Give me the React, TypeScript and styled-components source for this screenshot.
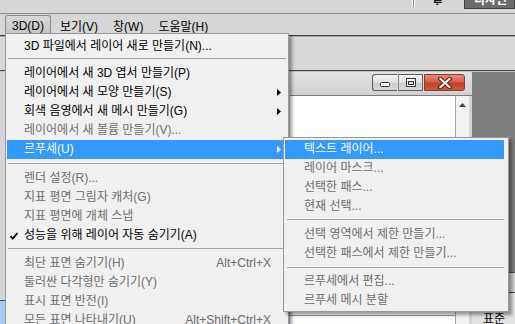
import React from "react";
import styled, { createGlobalStyle, css } from "styled-components";

const Global = createGlobalStyle`
  html, body { margin: 0; padding: 0; }
  body { width: 515px; height: 324px; overflow: hidden; background: #d6d6d6; }
  * { box-sizing: border-box; }
`;

const UI_FONT = `"Liberation Sans", "Noto Sans CJK KR", sans-serif`;

const Screen = styled.div`
  position: relative;
  width: 515px;
  height: 324px;
  overflow: hidden;
  display: flex;
  flex-direction: column;
  font-family: ${UI_FONT};
  font-size: 12px;
  background: #d6d6d6;
`;

/* ---------- top workspace strip ---------- */
const TopStrip = styled.div`
  height: 14px;
  flex: none;
  display: flex;
  align-items: flex-start;
  padding-left: 412px;
  border-bottom: 1px solid #8d8d8d;
  background: #d6d6d6;
  overflow: hidden;
`;
const Pipe = styled.div`
  width: 3px;
  height: 7px;
  border-left: 1px solid #fbfbfb;
  border-right: 1px solid #fbfbfb;
  background: #8a8a8a;
`;
const WorkLabel = styled.div`
  margin-left: 17px;
  height: 5px;
  overflow: hidden;
  font-weight: bold;
  color: #111;
  line-height: 12px;
  span { display: block; margin-top: -8px; }
`;
const WorkButton = styled.div`
  margin-left: 14px;
  width: 60px;
  height: 9px;
  overflow: hidden;
  background: #6c6c6c;
  border: 1px solid #3e3e3e;
  border-top: none;
  color: #fff;
  font-weight: bold;
  line-height: 12px;
  padding-left: 9px;
  span { display: block; margin-top: -6px; }
`;

/* ---------- menu bar ---------- */
const MenuBar = styled.div`
  height: 22px;
  flex: none;
  display: flex;
  align-items: flex-start;
  gap: 3px;
  padding: 1px 0 0 5px;
  border-bottom: 1px solid #3d3d3d;
  background: #d6d6d6;
`;
const MenuTitle = styled.div<{ $active?: boolean }>`
  height: 19px;
  display: flex;
  align-items: center;
  padding: 0 5px;
  border: 1px solid transparent;
  border-bottom: none;
  color: #000;
  white-space: nowrap;
  ${(p) =>
    p.$active &&
    css`
      height: 20px;
      padding: 0 6px;
      border-color: #8a8a8a;
      border-radius: 3px 3px 0 0;
      background: linear-gradient(#d8d8d8, #c3c3c3);
    `}
`;

/* ---------- options bar ---------- */
const OptionsBar = styled.div`
  height: 35px;
  flex: none;
  border-top: 1px solid #a2a2a2;
  border-bottom: 1px solid #454545;
  background: #d8d8d8;
`;

/* ---------- main work area ---------- */
const MainArea = styled.div`
  flex: 1;
  display: flex;
  border-top: 1px solid #c4c4c4;
  min-height: 0;
`;
const LeftDock = styled.div`
  width: 290px;
  flex: none;
  display: flex;
  flex-direction: column;
  justify-content: flex-end;
  background: #d6d6d6;
`;
const BlueTab = styled.div`
  height: 24px;
  border-top: 1px solid #4f4f4f;
  background: #a9c9ef;
`;

const DocWindow = styled.div`
  width: 182px;
  flex: none;
  display: flex;
  flex-direction: column;
  background: #d3d3d3;
  border-top-right-radius: 5px;
`;
const TitleBar = styled.div`
  height: 23px;
  flex: none;
  display: flex;
  justify-content: flex-end;
  align-items: flex-start;
  padding: 2px 7px 0 0;
  background: linear-gradient(#e3e3e3, #d1d1d1);
  border-top-right-radius: 5px;
`;
const WinButtons = styled.div`
  display: flex;
  gap: 1px;
`;
const WinBtn = styled.div<{ $kind: "min" | "max" | "close" }>`
  height: 17px;
  width: ${(p) => (p.$kind === "close" ? 41 : 25)}px;
  display: flex;
  align-items: center;
  justify-content: center;
  border: 1px solid #5e5e5e;
  background: linear-gradient(#f6f6f6 0%, #dedede 50%, #c9c9c9 51%, #d8d8d8 100%);
  ${(p) =>
    p.$kind === "min" &&
    css`
      border-radius: 3px 0 0 3px;
      border-right: none;
    `}
  ${(p) =>
    p.$kind === "max" &&
    css`
      border-left: 1px solid #8a8a8a;
    `}
  ${(p) =>
    p.$kind === "close" &&
    css`
      border-radius: 0 3px 3px 0;
      border-color: #8a3a2e;
      background: linear-gradient(#e98b7b 0%, #d3604c 45%, #bf3f2a 55%, #cf5a43 100%);
    `}
`;
const DocBody = styled.div`
  flex: 1;
  display: flex;
  border-top: 1px solid #7b7b7b;
  padding-right: 3px;
  min-height: 0;
`;
const Canvas = styled.div`
  flex: 1;
  display: flex;
  flex-direction: column;
  justify-content: flex-end;
  background: #fff;
`;
const CanvasFoot = styled.div`
  height: 9px;
  border-top: 1px solid #9c9c9c;
  background: #fdfdfd;
`;
const VScroll = styled.div`
  width: 14px;
  flex: none;
  display: flex;
  justify-content: center;
  padding-top: 7px;
  background: #f2f2f2;
  border-left: 1px solid #a4a4a4;
`;

const RightDock = styled.div`
  flex: 1;
  display: flex;
  flex-direction: column;
`;
const DarkArea = styled.div`
  flex: 1;
  background: #7f7f7f;
`;
const PanelArea = styled.div`
  height: 52px;
  flex: none;
  display: flex;
  flex-direction: column;
  justify-content: space-between;
  border-top: 1px solid #555;
  background: #e2e2e2;
`;
const PanelTab = styled.div`
  align-self: flex-end;
  width: 8px;
  height: 20px;
  border-left: 1px solid #4a4a4a;
  border-bottom: 1px solid #4a4a4a;
  background: #d0d0d0;
`;
const PanelText = styled.div`
  padding-left: 11px;
  height: 12px;
  line-height: 14px;
  color: #000;
  overflow: hidden;
`;

/* ---------- dropdown menus ---------- */
const MenuPanel = styled.div<{ $left: number; $top: number; $width: number; $pad: string }>`
  position: absolute;
  left: ${(p) => p.$left}px;
  top: ${(p) => p.$top}px;
  width: ${(p) => p.$width}px;
  padding: ${(p) => p.$pad};
  border: 1px solid #979797;
  background: #f0f0f0;
  box-shadow: 3px 3px 3px rgba(0, 0, 0, 0.38);
  font-family: ${UI_FONT};
  font-size: 12px;
  z-index: 2;
`;

type ItemState = "normal" | "disabled" | "hot";

const Row = styled.div<{ $state: ItemState; $gutter: number }>`
  height: 19px;
  display: grid;
  grid-template-columns: ${(p) => p.$gutter}px 1fr auto 15px;
  align-items: center;
  white-space: nowrap;
  line-height: 19px;
  color: ${(p) => (p.$state === "hot" ? "#fff" : p.$state === "disabled" ? "#6d6d6d" : "#000")};
  background: ${(p) => (p.$state === "hot" ? "#3399ff" : "transparent")};
`;
const CheckCell = styled.span`
  display: flex;
  padding-left: 3px;
`;
const Label = styled.span``;
const Shortcut = styled.span``;
const ArrowCell = styled.span`
  display: flex;
  justify-content: center;
`;
const Sep = styled.div<{ $h: number; $t: number; $inset: number }>`
  height: ${(p) => p.$h}px;
  padding-top: ${(p) => p.$t}px;
  &::after {
    content: "";
    display: block;
    height: 1px;
    margin-left: ${(p) => p.$inset}px;
    background: #a3a3a3;
  }
`;

const Check = () => (
  <svg width="8" height="8" viewBox="0 0 8 8">
    <path d="M0.6 4.2 L2.8 6.6 L7.4 1" fill="none" stroke="#000" strokeWidth="1.8" />
  </svg>
);
const Arrow = ({ color }: { color: string }) => (
  <svg width="4" height="7" viewBox="0 0 4 7">
    <polygon points="0,0 4,3.5 0,7" fill={color} />
  </svg>
);
const UpArrow = () => (
  <svg width="7" height="4" viewBox="0 0 7 4">
    <polygon points="3.5,0 7,4 0,4" fill="#444" />
  </svg>
);
const MinIcon = () => (
  <svg width="12" height="10" viewBox="0 0 12 10">
    <rect x="1.5" y="4.5" width="9" height="4" rx="1" fill="#fff" stroke="#333" />
  </svg>
);
const MaxIcon = () => (
  <svg width="12" height="11" viewBox="0 0 12 11">
    <rect x="1.5" y="1.5" width="9" height="8" fill="#fff" stroke="#333" />
    <rect x="3.5" y="4.5" width="5" height="3" fill="#d8d8d8" stroke="#333" />
  </svg>
);
const CloseIcon = () => (
  <svg width="14" height="12" viewBox="0 0 14 12">
    <path d="M2 1.5 L12 10.5 M12 1.5 L2 10.5" stroke="#5a1a10" strokeWidth="4" strokeLinecap="round" />
    <path d="M2.3 1.8 L11.7 10.2 M11.7 1.8 L2.3 10.2" stroke="#fff" strokeWidth="2.2" strokeLinecap="round" />
  </svg>
);

type Entry =
  | { kind: "item"; label: string; state?: ItemState; shortcut?: string; sub?: boolean; checked?: boolean }
  | { kind: "sep"; h: number; t: number };

const mainItems: Entry[] = [
  { kind: "item", label: "3D 파일에서 레이어 새로 만들기(N)..." },
  { kind: "sep", h: 8, t: 2 },
  { kind: "item", label: "레이어에서 새 3D 엽서 만들기(P)" },
  { kind: "item", label: "레이어에서 새 모양 만들기(S)", sub: true },
  { kind: "item", label: "회색 음영에서 새 메시 만들기(G)", sub: true },
  { kind: "item", label: "레이어에서 새 볼륨 만들기(V)...", state: "disabled" },
  { kind: "item", label: "르푸세(U)", state: "hot", sub: true },
  { kind: "sep", h: 10, t: 4 },
  { kind: "item", label: "렌더 설정(R)...", state: "disabled" },
  { kind: "item", label: "지표 평면 그림자 캐처(G)", state: "disabled" },
  { kind: "item", label: "지표 평면에 개체 스냅", state: "disabled" },
  { kind: "item", label: "성능을 위해 레이어 자동 숨기기(A)", checked: true },
  { kind: "sep", h: 9, t: 3 },
  { kind: "item", label: "최단 표면 숨기기(H)", state: "disabled", shortcut: "Alt+Ctrl+X" },
  { kind: "item", label: "둘러싼 다각형만 숨기기(Y)", state: "disabled" },
  { kind: "item", label: "표시 표면 반전(I)", state: "disabled" },
  { kind: "item", label: "모든 표면 나타내기(U)", state: "disabled", shortcut: "Alt+Shift+Ctrl+X" },
];

const subItems: Entry[] = [
  { kind: "item", label: "텍스트 레이어...", state: "hot" },
  { kind: "item", label: "레이어 마스크...", state: "disabled" },
  { kind: "item", label: "선택한 패스...", state: "disabled" },
  { kind: "item", label: "현재 선택...", state: "disabled" },
  { kind: "sep", h: 9, t: 3 },
  { kind: "item", label: "선택 영역에서 제한 만들기...", state: "disabled" },
  { kind: "item", label: "선택한 패스에서 제한 만들기...", state: "disabled" },
  { kind: "sep", h: 9, t: 4 },
  { kind: "item", label: "르푸세에서 편집...", state: "disabled" },
  { kind: "item", label: "르푸세 메시 분할", state: "disabled" },
];

const MenuEntries = ({ entries, gutter, inset }: { entries: Entry[]; gutter: number; inset: number }) => (
  <>
    {entries.map((e, i) =>
      e.kind === "sep" ? (
        <Sep key={i} $h={e.h} $t={e.t} $inset={inset} />
      ) : (
        <Row key={i} $state={e.state ?? "normal"} $gutter={gutter}>
          <CheckCell>{e.checked && <Check />}</CheckCell>
          <Label>{e.label}</Label>
          <Shortcut>{e.shortcut}</Shortcut>
          <ArrowCell>{e.sub && <Arrow color={e.state === "hot" ? "#fff" : "#000"} />}</ArrowCell>
        </Row>
      )
    )}
  </>
);

export default function App() {
  return (
    <>
      <Global />
      <Screen>
        <TopStrip>
          <Pipe />
          <WorkLabel>
            <span>필수</span>
          </WorkLabel>
          <WorkButton>
            <span>디자인</span>
          </WorkButton>
        </TopStrip>
        <MenuBar>
          <MenuTitle $active>3D(D)</MenuTitle>
          <MenuTitle>보기(V)</MenuTitle>
          <MenuTitle>창(W)</MenuTitle>
          <MenuTitle>도움말(H)</MenuTitle>
        </MenuBar>
        <OptionsBar />
        <MainArea>
          <LeftDock>
            <BlueTab />
          </LeftDock>
          <DocWindow>
            <TitleBar>
              <WinButtons>
                <WinBtn $kind="min">
                  <MinIcon />
                </WinBtn>
                <WinBtn $kind="max">
                  <MaxIcon />
                </WinBtn>
                <WinBtn $kind="close">
                  <CloseIcon />
                </WinBtn>
              </WinButtons>
            </TitleBar>
            <DocBody>
              <Canvas>
                <CanvasFoot />
              </Canvas>
              <VScroll>
                <UpArrow />
              </VScroll>
            </DocBody>
          </DocWindow>
          <RightDock>
            <DarkArea />
            <PanelArea>
              <PanelTab />
              <PanelText>표준</PanelText>
            </PanelArea>
          </RightDock>
        </MainArea>

        <MenuPanel $left={5} $top={33} $width={284} $pad="3px 2px 2px 1px">
          <MenuEntries entries={mainItems} gutter={17} inset={1} />
        </MenuPanel>
        <MenuPanel $left={283} $top={137} $width={226} $pad="2px 4px 1px 1px">
          <MenuEntries entries={subItems} gutter={19} inset={2} />
        </MenuPanel>
      </Screen>
    </>
  );
}
